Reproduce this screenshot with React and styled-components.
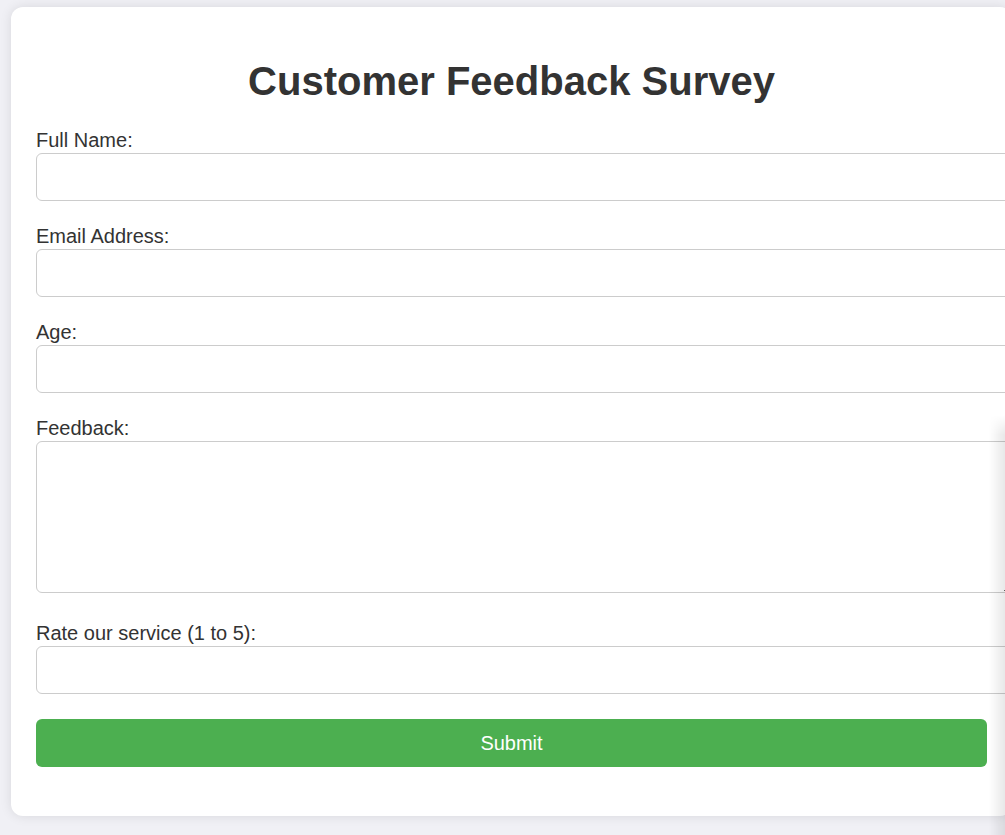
import { createGlobalStyle, styled } from "styled-components";

const GlobalStyle = createGlobalStyle`
  html, body {
    margin: 0;
    padding: 0;
    overflow: hidden;
  }
  body {
    background: #f0f0f5;
    font-family: "Liberation Sans", Arial, sans-serif;
    color: #333;
  }
`;

const Page = styled.div`
  padding: 7px 0 0 11px;
  min-height: 828px;
`;

const Card = styled.div`
  width: 951px;
  padding: 25px 25px 49px;
  background: #fff;
  border-radius: 12px;
  box-shadow: 0 0 12px rgba(0, 0, 0, 0.1);
`;

const Title = styled.h1`
  margin: 26px 0 25px;
  font-size: 40px;
  line-height: 46px;
  font-weight: bold;
  text-align: center;
  color: #333;
`;

const Label = styled.label`
  display: block;
  font-size: 20px;
  line-height: 23px;
  margin-bottom: 1px;
  color: #333;
`;

const Input = styled.input`
  display: block;
  width: 100%;
  height: 46px;
  padding: 0 12px;
  margin: 0 0 24px;
  border: 1px solid #ccc;
  border-radius: 6px;
  font-size: 20px;
  font-family: inherit;
  box-sizing: content-box;
  outline: none;
`;

const TextArea = styled.textarea`
  display: block;
  width: 100%;
  height: 128px;
  padding: 11px 12px;
  margin: 0 0 29px;
  border: 1px solid #ccc;
  border-radius: 6px;
  font-size: 20px;
  font-family: inherit;
  outline: none;
`;

const SubmitButton = styled.button`
  display: block;
  width: 100%;
  height: 48px;
  margin-top: 25px;
  background: #4caf50;
  border: none;
  border-radius: 6px;
  color: #fff;
  font-size: 20px;
  font-family: "Liberation Sans", Arial, sans-serif;
  cursor: pointer;
`;

const EdgeShade = styled.div`
  position: fixed;
  right: 0;
  top: 415px;
  bottom: 0;
  width: 16px;
  background: linear-gradient(to right, rgba(0, 0, 0, 0), rgba(0, 0, 0, 0.09));
  -webkit-mask-image: linear-gradient(to bottom, transparent, #000 20px);
  mask-image: linear-gradient(to bottom, transparent, #000 20px);
  pointer-events: none;
`;

const fields = [
  { id: "name", label: "Full Name:", type: "text" },
  { id: "email", label: "Email Address:", type: "email" },
  { id: "age", label: "Age:", type: "number" },
];

function App() {
  return (
    <>
      <GlobalStyle />
      <Page>
        <Card>
          <Title>Customer Feedback Survey</Title>
          <form onSubmit={(e) => e.preventDefault()}>
            {fields.map((field) => (
              <div key={field.id}>
                <Label htmlFor={field.id}>{field.label}</Label>
                <Input id={field.id} type={field.type} />
              </div>
            ))}
            <Label htmlFor="feedback">Feedback:</Label>
            <TextArea id="feedback" />
            <Label htmlFor="rating">Rate our service (1 to 5):</Label>
            <Input id="rating" type="number" min="1" max="5" />
            <SubmitButton type="submit">Submit</SubmitButton>
          </form>
        </Card>
      </Page>
      <EdgeShade />
    </>
  );
}

export default App;
